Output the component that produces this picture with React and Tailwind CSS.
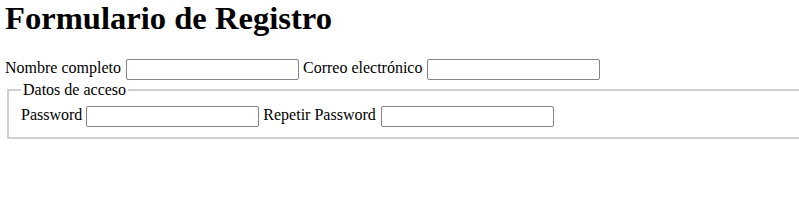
import React from 'react';

const Field = ({ className = '' }) => (
  <input
    type="text"
    className={`inline-block w-[173px] h-[21px] align-baseline border border-[#858585] rounded-[2px] bg-white px-[2px] text-[13.33px] ${className}`}
  />
);

const App = () => {
  return (
    <div className="w-[799px] h-[213px] overflow-hidden bg-white text-black font-['Liberation_Serif','Times_New_Roman',serif] text-[16px] leading-[normal]">
      <div className="w-[840px] pl-[5px]">
        <h1 className="text-[32.6px] font-bold leading-[normal] mb-[20px]">Formulario de Registro</h1>
        <form>
          <div className="h-[22px] leading-[22px]">
            <label>Nombre completo</label> <Field className="ml-[1px]" /> <label>Correo electrónico</label> <Field className="ml-[1px]" />
          </div>
          <fieldset className="mt-[2px] mx-[2px] border-2 border-[#d0d0d0] pt-[5px] px-[12px] pb-[11px]">
            <legend className="px-[2px] leading-[normal]">Datos de acceso</legend>
            <div className="h-[22px] leading-[22px]">
              <label>Password</label> <Field /> <label>Repetir Password</label> <Field className="ml-[1px]" />
            </div>
          </fieldset>
        </form>
      </div>
    </div>
  );
};

export default App;
